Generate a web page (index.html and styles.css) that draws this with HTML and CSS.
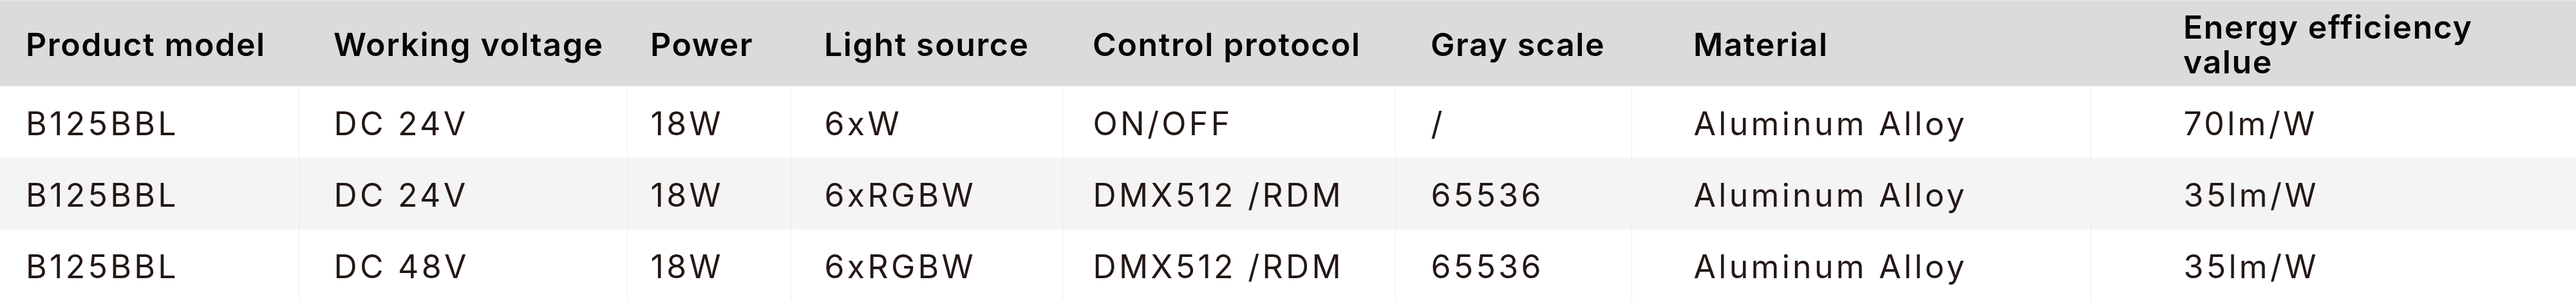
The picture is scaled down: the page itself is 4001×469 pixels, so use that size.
FILE: index.html
```html
<!DOCTYPE html>
<html lang="en">
<head>
<meta charset="utf-8">
<title>Product specifications</title>
<link rel="stylesheet" href="styles.css">
</head>
<body>
<table class="spec">
  <colgroup>
    <col class="w1"><col class="w2"><col class="w3"><col class="w4">
    <col class="w5"><col class="w6"><col class="w7"><col class="w8">
  </colgroup>
  <thead>
    <tr>
      <th>Product model</th>
      <th>Working voltage</th>
      <th>Power</th>
      <th>Light source</th>
      <th>Control protocol</th>
      <th>Gray scale</th>
      <th>Material</th>
      <th><span class="wrap">Energy efficiency value</span></th>
    </tr>
  </thead>
  <tbody>
    <tr>
      <td>B125BBL</td><td>DC 24V</td><td>18W</td><td>6xW</td>
      <td>ON/OFF</td><td>/</td><td>Aluminum Alloy</td><td>70lm/W</td>
    </tr>
    <tr class="alt">
      <td>B125BBL</td><td>DC 24V</td><td>18W</td><td>6xRGBW</td>
      <td>DMX512 /RDM</td><td>65536</td><td>Aluminum Alloy</td><td>35lm/W</td>
    </tr>
    <tr>
      <td>B125BBL</td><td>DC 48V</td><td>18W</td><td>6xRGBW</td>
      <td>DMX512 /RDM</td><td>65536</td><td>Aluminum Alloy</td><td>35lm/W</td>
    </tr>
  </tbody>
</table>
</body>
</html>
```

FILE: styles.css
```css
html, body {
  margin: 0;
  padding: 0;
  background: #ffffff;
}

.spec {
  width: 4001px;
  table-layout: fixed;
  border-collapse: collapse;
  font-family: Inter, "Noto Sans", sans-serif;
  border-top: 1px solid #e6e6e6;
  border-right: 1px solid #e6e6e6;
}

.w1 { width: 464px; }
.w2 { width: 510px; }
.w3 { width: 254px; }
.w4 { width: 422px; }
.w5 { width: 517px; }
.w6 { width: 367px; }
.w7 { width: 713px; }
.w8 { width: 754px; }

.spec th {
  height: 133px;
  box-sizing: border-box;
  background: #dbdbdb;
  color: #080404;
  font-size: 50px;
  font-weight: 600;
  line-height: 54px;
  letter-spacing: 1.6px;
  text-align: left;
  vertical-align: middle;
  padding: 4px 0 0 0;
  border-bottom: 1px solid #e4e4e4;
}

.spec td {
  height: 111px;
  box-sizing: border-box;
  color: #231815;
  font-size: 50px;
  font-weight: 400;
  line-height: 54px;
  letter-spacing: 4.3px;
  text-align: left;
  vertical-align: middle;
  padding: 5px 0 0 0;
  border-left: 1px solid #ececec;
  white-space: nowrap;
}

.spec td:first-child { border-left: none; }

.spec tr.alt td { background: #f4f4f4; }

.spec th:nth-child(1), .spec td:nth-child(1) { padding-left: 40px; }
.spec th:nth-child(2), .spec td:nth-child(2) { padding-left: 54px; }
.spec th:nth-child(3), .spec td:nth-child(3) { padding-left: 36px; }
.spec th:nth-child(4), .spec td:nth-child(4) { padding-left: 52px; }
.spec th:nth-child(5), .spec td:nth-child(5) { padding-left: 47px; }
.spec th:nth-child(6), .spec td:nth-child(6) { padding-left: 55px; }
.spec th:nth-child(7), .spec td:nth-child(7) { padding-left: 96px; }
.spec th:nth-child(8), .spec td:nth-child(8) { padding-left: 144px; }

.wrap {
  display: block;
  max-width: 520px;
}
```
